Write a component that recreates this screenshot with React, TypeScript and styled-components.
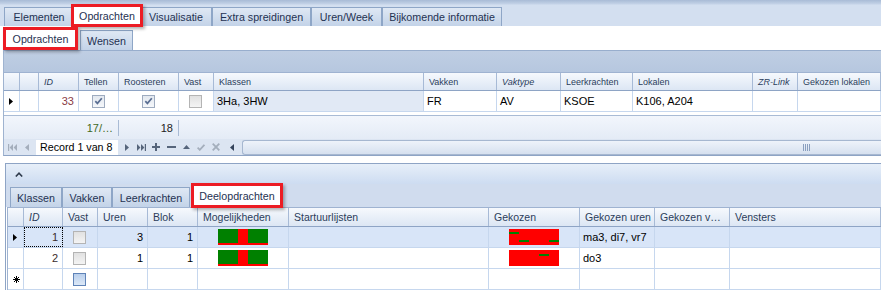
import React from 'react';
import styled, { createGlobalStyle, css } from 'styled-components';

const GlobalStyle = createGlobalStyle`
  html, body {
    margin: 0;
    padding: 0;
    background: #fff;
  }
  body {
    font-family: "Liberation Sans", Arial, sans-serif;
    font-size: 11px;
    color: #000;
  }
`;

const UP_COLS = '16px 19px 40px 40px 60px 35px 210px 73px 64px 72px 120px 45px 1fr';
const DN_COLS = '16px 39px 35px 50px 50px 91px 200px 91px 75px 75px 1fr';

// the red annotation frame drawn round the chosen tabs
const redFrame = css`
  position: relative;
  z-index: 2;
  background: #fff;
  border-color: #fff;
  box-shadow: 0 0 0 3px #ec1c24, 2px 2px 3px 3px rgba(0, 0, 0, 0.3);
`;

const Screen = styled.div`
  width: 881px;
  height: 292px;
  overflow: hidden;
  background: #fff;
  display: flex;
  flex-direction: column;
`;

const TopTabBar = styled.div`
  flex: none;
  height: 26px;
  box-sizing: border-box;
  display: flex;
  align-items: flex-end;
  padding-left: 4px;
  background: linear-gradient(#a8bbd6 0, #c3d2e7 4px, #d3dff0 5px, #d3dff0 100%);
`;

const Tab = styled.div<{ $w: number; $active?: boolean }>`
  flex: none;
  box-sizing: border-box;
  width: ${(p) => p.$w}px;
  height: 19px;
  display: flex;
  align-items: center;
  justify-content: center;
  font-size: 10.7px;
  color: #1f3252;
  white-space: nowrap;
  border: 1px solid #8ea6c7;
  border-bottom: none;
  background: linear-gradient(#dfe8f4, #c3d3e8);
  ${(p) =>
    p.$active &&
    css`
      height: 17px;
      margin-bottom: 2px;
      ${redFrame}
    `}
`;

const SubTabBar = styled.div`
  flex: none;
  height: 24px;
  display: flex;
  align-items: flex-end;
  padding-left: 6px;
  background: #fff;
`;

const SubTab = styled(Tab)`
  height: 20px;
  margin-left: 5px;
  ${(p) =>
    p.$active &&
    css`
      height: 17px;
      margin-left: 0;
      margin-bottom: 3px;
    `}
`;

const GridPanel = styled.div`
  flex: none;
  margin-left: 3px;
  border-left: 1px solid #9fb3d0;
  border-bottom: 1px solid #8ea4c5;
  display: flex;
  flex-direction: column;
`;

const GroupPanel = styled.div`
  height: 22px;
  box-sizing: border-box;
  border-top: 1px solid #98aecd;
  background: linear-gradient(#bfcee3, #b6c7df);
`;

const HeaderRow = styled.div<{ $cols: string; $size: number; $h: number }>`
  display: grid;
  grid-template-columns: ${(p) => p.$cols};
  height: ${(p) => p.$h}px;
  box-sizing: border-box;
  border-top: 1px solid #9fb3d1;
  border-bottom: 1px solid #8ea4c5;
  background: linear-gradient(#f6f9fd, #dce6f4);
  font-size: ${(p) => p.$size}px;
  color: #2b3d5b;
`;

const HeadCell = styled.div<{ $italic?: boolean }>`
  box-sizing: border-box;
  display: flex;
  align-items: center;
  padding: 0 5px;
  border-right: 1px solid #a7bad6;
  font-style: ${(p) => (p.$italic ? 'italic' : 'normal')};
  white-space: nowrap;
  overflow: hidden;
`;

const Row = styled.div<{ $cols: string; $bg?: string }>`
  display: grid;
  grid-template-columns: ${(p) => p.$cols};
  height: 21px;
  box-sizing: border-box;
  border-bottom: 1px solid #c6d7ee;
  background: ${(p) => p.$bg ?? '#fff'};
`;

const Cell = styled.div<{ $align?: 'left' | 'right' | 'center'; $bg?: string; $color?: string; $focus?: boolean }>`
  box-sizing: border-box;
  display: flex;
  align-items: center;
  justify-content: ${(p) =>
    p.$align === 'right' ? 'flex-end' : p.$align === 'center' ? 'center' : 'flex-start'};
  padding: 0 4px 0 3px;
  border-right: 1px solid #c6d7ee;
  background: ${(p) => p.$bg ?? 'transparent'};
  color: ${(p) => p.$color ?? '#000'};
  font-size: 11px;
  white-space: nowrap;
  overflow: hidden;
  ${(p) =>
    p.$focus &&
    css`
      outline: 1px dotted #000;
      outline-offset: -1px;
    `}
`;

const EmptyArea = styled.div`
  height: 3px;
  background: #fff;
`;

const FooterRow = styled.div`
  display: grid;
  grid-template-columns: ${UP_COLS};
  height: 24px;
  box-sizing: border-box;
  border-top: 1px solid #a9bbd5;
  background: linear-gradient(#f2f6fc, #e4ebf6);
`;

const FooterCell = styled.div<{ $sep?: boolean; $color?: string }>`
  box-sizing: border-box;
  display: flex;
  align-items: center;
  justify-content: flex-end;
  margin: 4px 0 3px;
  padding: 0 5px;
  color: ${(p) => p.$color ?? '#222'};
  font-size: 11px;
  white-space: nowrap;
  border-right: ${(p) => (p.$sep ? '1px solid #a9bbd5' : 'none')};
`;

const NavBar = styled.div`
  height: 16px;
  display: flex;
  align-items: center;
  background: #dce5f2;
`;

const NavButton = styled.span<{ $w: number }>`
  flex: none;
  width: ${(p) => p.$w}px;
  height: 16px;
  display: flex;
  align-items: center;
  justify-content: center;
`;

const RecordBox = styled.span`
  flex: none;
  width: 82px;
  height: 15px;
  margin-left: 3px;
  padding-left: 4px;
  box-sizing: border-box;
  display: flex;
  align-items: center;
  background: #fff;
  font-size: 10.7px;
  color: #000;
  white-space: nowrap;
`;

const ScrollTrack = styled.div`
  flex: 1;
  height: 15px;
  margin-left: 2px;
  box-sizing: border-box;
  border: 1px solid #a6b7d0;
  border-right: none;
  border-radius: 3px 0 0 3px;
  background: linear-gradient(#eef3fa, #d6e0ef);
  display: flex;
  align-items: center;
  padding-left: 560px;
`;

const Grip = styled.span`
  width: 7px;
  height: 7px;
  background: repeating-linear-gradient(90deg, #8a9fbf 0 1px, transparent 1px 2px);
`;

const DetailPanel = styled.div`
  flex: none;
  margin: 7px 0 0 5px;
  border-left: 1px solid #8ea4c5;
  border-top: 1px solid #8ea4c5;
  display: flex;
  flex-direction: column;
`;

const DetailHeader = styled.div`
  height: 20px;
  display: flex;
  align-items: center;
  padding-left: 9px;
  background: linear-gradient(#e7eff9, #cddcf1);
`;

const DetailTabBar = styled.div`
  height: 23px;
  display: flex;
  align-items: flex-end;
  padding-left: 4px;
  background: #d0dcee;
`;

const DetailTab = styled(Tab)`
  height: 20px;
  ${(p) =>
    p.$active &&
    css`
      height: 19px;
      margin-left: 4px;
      margin-bottom: 2px;
    `}
`;

const DetailBody = styled.div`
  padding-left: 1px;
`;

const DetailGrid = styled.div`
  border-left: 1px solid #9fb3d1;
`;

const Indicator = styled.div`
  box-sizing: border-box;
  display: flex;
  align-items: center;
  padding-left: 5px;
  border-right: 1px solid #c6d7ee;
`;

const CheckBox = styled.span<{ $kind: 'checked' | 'off' | 'new' }>`
  box-sizing: border-box;
  width: 13px;
  height: 13px;
  display: inline-flex;
  align-items: center;
  justify-content: center;
  ${(p) =>
    p.$kind === 'checked'
      ? css`
          border: 1px solid #9eabbf;
          background: linear-gradient(#e3e8ef, #f5f7fa);
        `
      : p.$kind === 'new'
      ? css`
          border: 1px solid #5f83b8;
          background: linear-gradient(#b9cfec, #dce8f7);
        `
      : css`
          border: 1px solid #b4b4b4;
          background: linear-gradient(#e1e1e1, #f4f4f4);
        `}
`;

const Chevron = () => (
  <svg width="8" height="5" viewBox="0 0 8 5">
    <polyline points="0.8,4.5 4,1.2 7.2,4.5" fill="none" stroke="#2f3b4d" strokeWidth="1.6" />
  </svg>
);

const RowArrow = () => (
  <svg width="4" height="7" viewBox="0 0 4 7">
    <polygon points="0,0 4,3.5 0,7" fill="#000" />
  </svg>
);

const NewRowMark = () => (
  <svg width="7" height="7" viewBox="0 0 7 7">
    <g stroke="#000" strokeWidth="1">
      <line x1="3.5" y1="0" x2="3.5" y2="7" />
      <line x1="0" y1="3.5" x2="7" y2="3.5" />
      <line x1="1" y1="1" x2="6" y2="6" />
      <line x1="6" y1="1" x2="1" y2="6" />
    </g>
  </svg>
);

const Tick = () => (
  <svg width="9" height="8" viewBox="0 0 9 8">
    <polyline points="1.3,4.2 3.4,6.4 7.8,1.2" fill="none" stroke="#5a6e92" strokeWidth="1.7" />
  </svg>
);

type NavKind = 'first' | 'prev' | 'next' | 'last' | 'plus' | 'minus' | 'up' | 'ok' | 'cancel' | 'left';

const NavIcon = ({ kind, color }: { kind: NavKind; color: string }) => {
  switch (kind) {
    case 'first':
      return (
        <svg width="9" height="7" viewBox="0 0 9 7" fill={color}>
          <rect x="0" y="0" width="1.2" height="7" />
          <polygon points="5,0 1.6,3.5 5,7" />
          <polygon points="9,0 5.6,3.5 9,7" />
        </svg>
      );
    case 'last':
      return (
        <svg width="9" height="7" viewBox="0 0 9 7" fill={color}>
          <polygon points="0,0 3.4,3.5 0,7" />
          <polygon points="4,0 7.4,3.5 4,7" />
          <rect x="7.8" y="0" width="1.2" height="7" />
        </svg>
      );
    case 'prev':
    case 'left':
      return (
        <svg width="4" height="7" viewBox="0 0 4 7" fill={color}>
          <polygon points="4,0 0,3.5 4,7" />
        </svg>
      );
    case 'next':
      return (
        <svg width="4" height="7" viewBox="0 0 4 7" fill={color}>
          <polygon points="0,0 4,3.5 0,7" />
        </svg>
      );
    case 'plus':
      return (
        <svg width="8" height="8" viewBox="0 0 8 8" fill={color}>
          <rect x="3" y="0" width="2" height="8" />
          <rect x="0" y="3" width="8" height="2" />
        </svg>
      );
    case 'minus':
      return (
        <svg width="9" height="8" viewBox="0 0 9 8" fill={color}>
          <rect x="0" y="3" width="9" height="2" />
        </svg>
      );
    case 'up':
      return (
        <svg width="7" height="4" viewBox="0 0 7 4" fill={color}>
          <polygon points="0,4 3.5,0 7,4" />
        </svg>
      );
    case 'ok':
      return (
        <svg width="8" height="7" viewBox="0 0 8 7">
          <polyline points="0.6,3.6 2.8,5.8 7.4,0.8" fill="none" stroke={color} strokeWidth="1.8" />
        </svg>
      );
    case 'cancel':
      return (
        <svg width="8" height="8" viewBox="0 0 8 8" stroke={color} strokeWidth="1.8">
          <line x1="0.7" y1="0.7" x2="7.3" y2="7.3" />
          <line x1="7.3" y1="0.7" x2="0.7" y2="7.3" />
        </svg>
      );
    default:
      return null;
  }
};

// small availability strip: green free, red taken
const OptionsBar = () => (
  <svg width="50" height="16" viewBox="0 0 50 16">
    <rect x="0" y="0" width="50" height="14" fill="#008000" />
    <rect x="20" y="0" width="10" height="14" fill="#ff0000" />
    <rect x="0" y="14" width="50" height="2" fill="#ff0000" />
  </svg>
);

const ChosenBar = ({ marks }: { marks: [number, number][] }) => (
  <svg width="50" height="16" viewBox="0 0 50 16">
    <rect x="0" y="0" width="50" height="16" fill="#ff0000" />
    {marks.map(([x, y], i) => (
      <rect key={i} x={x} y={y} width="10" height="2" fill="#008000" />
    ))}
  </svg>
);

const topTabs: [string, number][] = [
  ['Elementen', 70],
  ['Opdrachten', 66],
  ['Visualisatie', 72],
  ['Extra spreidingen', 99],
  ['Uren/Week', 71],
  ['Bijkomende informatie', 120],
];

const upHeaders: [string, boolean][] = [
  ['', false],
  ['', false],
  ['ID', true],
  ['Tellen', false],
  ['Roosteren', false],
  ['Vast', false],
  ['Klassen', false],
  ['Vakken', false],
  ['Vaktype', true],
  ['Leerkrachten', false],
  ['Lokalen', false],
  ['ZR-Link', true],
  ['Gekozen lokalen', false],
];

const dnHeaders: [string, boolean][] = [
  ['', false],
  ['ID', true],
  ['Vast', false],
  ['Uren', false],
  ['Blok', false],
  ['Mogelijkheden', false],
  ['Startuurlijsten', false],
  ['Gekozen', false],
  ['Gekozen uren', false],
  ['Gekozen v…', false],
  ['Vensters', false],
];

const parts = [
  { id: 1, uren: 3, blok: 1, marks: [[0, 3], [10, 11], [40, 11]] as [number, number][], hours: 'ma3, di7, vr7' },
  { id: 2, uren: 1, blok: 1, marks: [[30, 4]] as [number, number][], hours: 'do3' },
];

const dark = '#56657b';
const grey = '#a4aebc';

export default function App() {
  return (
    <Screen>
      <GlobalStyle />
      <TopTabBar>
        {topTabs.map(([label, w]) => (
          <Tab key={label} $w={w} $active={label === 'Opdrachten'}>
            {label}
          </Tab>
        ))}
      </TopTabBar>

      <SubTabBar>
        <SubTab $w={69} $active>
          Opdrachten
        </SubTab>
        <SubTab $w={53}>Wensen</SubTab>
      </SubTabBar>

      <GridPanel>
        <GroupPanel />
        <HeaderRow $cols={UP_COLS} $size={9} $h={19}>
          {upHeaders.map(([h, it], i) => (
            <HeadCell key={i} $italic={it}>
              {h}
            </HeadCell>
          ))}
        </HeaderRow>
        <Row $cols={UP_COLS}>
          <Indicator>
            <RowArrow />
          </Indicator>
          <Cell />
          <Cell $align="right" $color="#8a3c44">
            33
          </Cell>
          <Cell $align="center">
            <CheckBox $kind="checked">
              <Tick />
            </CheckBox>
          </Cell>
          <Cell $align="center">
            <CheckBox $kind="checked">
              <Tick />
            </CheckBox>
          </Cell>
          <Cell $align="center">
            <CheckBox $kind="off" />
          </Cell>
          <Cell $bg="#e1e9f5">3Ha, 3HW</Cell>
          <Cell>FR</Cell>
          <Cell>AV</Cell>
          <Cell>KSOE</Cell>
          <Cell>K106, A204</Cell>
          <Cell />
          <Cell />
        </Row>
        <EmptyArea />
        <FooterRow>
          <span />
          <span />
          <span />
          <FooterCell $sep $color="#3f6a1c">
            17/…
          </FooterCell>
          <FooterCell $sep>18</FooterCell>
        </FooterRow>
        <NavBar>
          <NavButton $w={16}>
            <NavIcon kind="first" color={grey} />
          </NavButton>
          <NavButton $w={13}>
            <NavIcon kind="prev" color={grey} />
          </NavButton>
          <RecordBox>Record 1 van 8</RecordBox>
          <NavButton $w={17}>
            <NavIcon kind="next" color={dark} />
          </NavButton>
          <NavButton $w={13}>
            <NavIcon kind="last" color={dark} />
          </NavButton>
          <NavButton $w={16}>
            <NavIcon kind="plus" color={dark} />
          </NavButton>
          <NavButton $w={15}>
            <NavIcon kind="minus" color={dark} />
          </NavButton>
          <NavButton $w={15}>
            <NavIcon kind="up" color={dark} />
          </NavButton>
          <NavButton $w={14}>
            <NavIcon kind="ok" color={grey} />
          </NavButton>
          <NavButton $w={16}>
            <NavIcon kind="cancel" color={grey} />
          </NavButton>
          <NavButton $w={16}>
            <NavIcon kind="left" color="#34435b" />
          </NavButton>
          <ScrollTrack>
            <Grip />
          </ScrollTrack>
        </NavBar>
      </GridPanel>

      <DetailPanel>
        <DetailHeader>
          <Chevron />
        </DetailHeader>
        <DetailTabBar>
          <DetailTab $w={52}>Klassen</DetailTab>
          <DetailTab $w={50}>Vakken</DetailTab>
          <DetailTab $w={78}>Leerkrachten</DetailTab>
          <DetailTab $w={86} $active>
            Deelopdrachten
          </DetailTab>
        </DetailTabBar>
        <DetailBody>
          <DetailGrid>
            <HeaderRow $cols={DN_COLS} $size={10.5} $h={20}>
              {dnHeaders.map(([h, it], i) => (
                <HeadCell key={i} $italic={it}>
                  {h}
                </HeadCell>
              ))}
            </HeaderRow>
            {parts.map((p, i) => (
              <Row key={p.id} $cols={DN_COLS} $bg={i === 0 ? '#d8e5f8' : '#fff'}>
                <Indicator>{i === 0 && <RowArrow />}</Indicator>
                <Cell $align="right" $color="#3a2b2b" $focus={i === 0}>
                  {p.id}
                </Cell>
                <Cell $align="center">
                  <CheckBox $kind="off" />
                </Cell>
                <Cell $align="right">{p.uren}</Cell>
                <Cell $align="right">{p.blok}</Cell>
                <Cell $align="center">
                  <OptionsBar />
                </Cell>
                <Cell />
                <Cell $align="center">
                  <ChosenBar marks={p.marks} />
                </Cell>
                <Cell>{p.hours}</Cell>
                <Cell />
                <Cell />
              </Row>
            ))}
            <Row $cols={DN_COLS}>
              <Indicator>
                <NewRowMark />
              </Indicator>
              <Cell />
              <Cell $align="center">
                <CheckBox $kind="new" />
              </Cell>
              <Cell />
              <Cell />
              <Cell />
              <Cell />
              <Cell />
              <Cell />
              <Cell />
              <Cell />
            </Row>
          </DetailGrid>
        </DetailBody>
      </DetailPanel>
    </Screen>
  );
}
